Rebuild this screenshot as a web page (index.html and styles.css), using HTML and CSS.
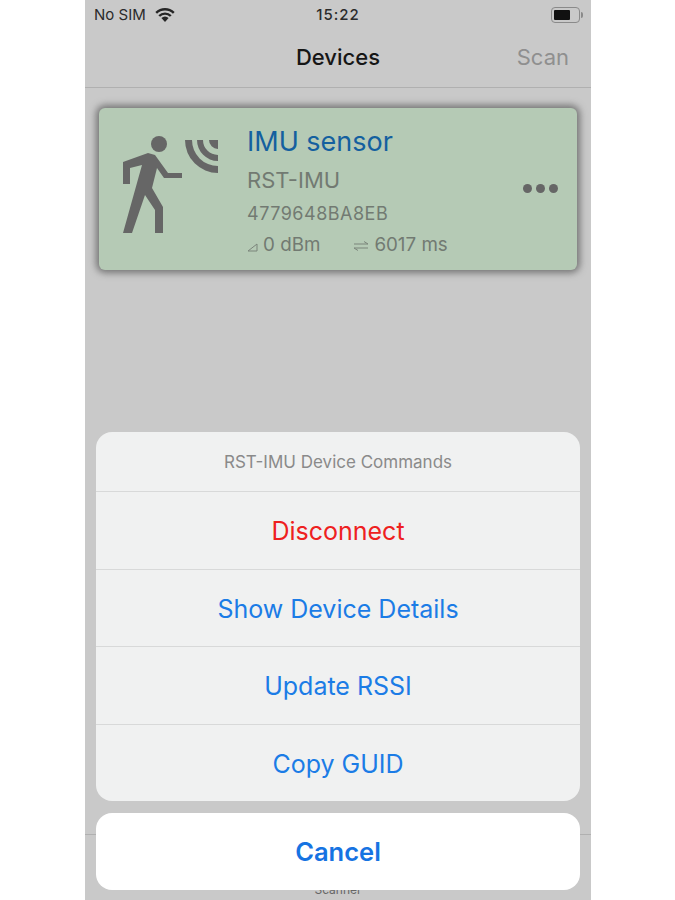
FILE: index.html
```html
<!DOCTYPE html>
<html lang="en">
<head>
<meta charset="utf-8">
<title>Devices</title>
<link rel="stylesheet" href="styles.css">
</head>
<body>
<div class="phone">
  <div class="status">
    <div class="status-left">
      <span>No SIM</span>
      <svg class="wifi" viewBox="0 0 20 14" width="20" height="14"><path d="M10 14l-3.6-4a5 5 0 0 1 7.2 0z" fill="#262626"/><path d="M1.2 4.8a12.6 12.6 0 0 1 17.6 0M4.2 8a8.2 8.2 0 0 1 11.6 0" fill="none" stroke="#262626" stroke-width="2.4"/></svg>
    </div>
    <span class="time">15:22</span>
    <div class="battery"><span class="battery-body"><span class="battery-level"></span></span><span class="battery-tip"></span></div>
  </div>
  <header class="nav">
    <h1 class="nav-title">Devices</h1>
    <span class="nav-action">Scan</span>
  </header>
  <main class="content">
    <article class="card">
      <svg class="walker" viewBox="0 0 100 104" width="100" height="104">
        <circle cx="37" cy="13" r="8" fill="#666"/>
        <path d="M1 31 L26 22 L33 24 L46 42 L60 42 L60 47 L42 47 L35 37 L30 57 L41 76 L41 102 L33 102 L33 79 L23 64 L10 102 L1 102 L20 34 L8 37 L8 53 L1 53 Z" fill="#666"/>
        <path d="M96 42 A33 33 0 0 1 63 9 L70 9 A26 26 0 0 0 96 35 Z M96 30 A21 21 0 0 1 75 9 L81 9 A15 15 0 0 0 96 24 Z M96 18 A9 9 0 0 1 87 9 L96 9 Z" fill="#666"/>
      </svg>
      <div class="info">
        <div class="name">IMU sensor</div>
        <div class="model">RST-IMU</div>
        <div class="guid">4779648BA8EB</div>
        <div class="metrics">
          <span class="metric"><svg class="glyph" viewBox="0 0 11 10" width="11" height="10"><path d="M1 9L10 2V9Z" fill="none" stroke="#7b857b" stroke-width="1"/></svg>0 dBm</span>
          <span class="metric"><svg class="glyph-wide" viewBox="0 0 16 10" width="16" height="10"><path d="M1 3H15M11 .5L15 3M15 7H1M5 9.5L1 7" fill="none" stroke="#7b857b" stroke-width="1"/></svg>6017 ms</span>
        </div>
      </div>
      <div class="dots"><i></i><i></i><i></i></div>
    </article>
  </main>
  <footer class="tabbar"><span class="tab-label">Scanner</span></footer>
  <div class="sheet-wrap">
    <section class="sheet">
      <div class="sheet-title">RST-IMU Device Commands</div>
      <div class="sheet-row danger">Disconnect</div>
      <div class="sheet-row">Show Device Details</div>
      <div class="sheet-row">Update RSSI</div>
      <div class="sheet-row">Copy GUID</div>
    </section>
    <div class="cancel">Cancel</div>
  </div>
</div>
</body>
</html>
```
FILE: styles.css
```css
* { box-sizing: border-box; }
html, body { margin: 0; height: 100%; background: #fff; }
body { font-family: Inter, "Liberation Sans", sans-serif; overflow: hidden; }
.phone {
  position: relative;
  margin-left: 85px;
  width: 506px;
  height: 900px;
  background: #c9c9c9;
  display: flex;
  flex-direction: column;
  overflow: hidden;
}
.status {
  height: 29px;
  padding: 0 8px 0 9px;
  display: flex;
  align-items: center;
  justify-content: space-between;
  position: relative;
  font-size: 15px;
  color: #2b2b2b;
}
.status-left { display: flex; align-items: center; gap: 9px; }
.wifi { display: block; }
.time {
  position: absolute;
  left: 0;
  right: 0;
  text-align: center;
  font-weight: 500;
  letter-spacing: 1px;
}
.battery { display: flex; align-items: center; gap: 1px; }
.battery-body {
  width: 29px;
  height: 16px;
  border: 1px solid #8a8a8a;
  border-radius: 4px;
  padding: 2px;
  display: block;
}
.battery-level { display: block; width: 16px; height: 100%; background: #111; border-radius: 1px; }
.battery-tip { width: 2px; height: 6px; background: #8a8a8a; border-radius: 0 2px 2px 0; }
.nav {
  height: 59px;
  flex: none;
  padding-bottom: 2px;
  border-bottom: 1px solid #b0b0b0;
  display: flex;
  align-items: center;
  justify-content: center;
  position: relative;
}
.nav-title { margin: 0; font-size: 22px; font-weight: 500; color: #161616; }
.nav-action { position: absolute; right: 22px; font-size: 22px; color: #8f8f8f; }
.content { flex: 1; padding: 20px 14px 0; }
.card {
  height: 162px;
  background: #b5cab5;
  border-radius: 6px;
  box-shadow: 0 0 7px 3px #757575;
  display: flex;
  align-items: flex-start;
  padding: 23px 0 0 23px;
  position: relative;
}
.walker { flex: none; margin-right: 25px; }
.info { margin-top: -6px; color: #727a72; }
.name { font-size: 27px; line-height: 34px; color: #14609f; }
.model { font-size: 22px; line-height: 26px; margin-top: 8px; }
.guid { font-size: 18px; line-height: 22px; margin-top: 10px; letter-spacing: .5px; }
.metrics { display: flex; gap: 33px; font-size: 18.8px; line-height: 22px; margin-top: 9px; }
.metric { display: flex; align-items: center; gap: 5px; }
.glyph { margin-top: 3px; }
.glyph-wide { margin-top: 1px; }
.dots { position: absolute; right: 19px; top: 76px; display: flex; gap: 4px; }
.dots i { width: 9px; height: 9px; border-radius: 50%; background: #666; }
.tabbar {
  height: 66px;
  flex: none;
  border-top: 1px solid #b0b0b0;
  display: flex;
  align-items: flex-end;
  justify-content: center;
  font-size: 12px;
  color: #666;
}
.tab-label { margin-bottom: 3px; }
.sheet-wrap {
  position: absolute;
  left: 11px;
  right: 11px;
  top: 432px;
  display: flex;
  flex-direction: column;
  gap: 12px;
}
.sheet { background: #f0f1f1; border-radius: 16px; overflow: hidden; }
.sheet-title {
  height: 59px;
  display: flex;
  align-items: center;
  justify-content: center;
  font-size: 17px;
  color: #8a8a8a;
}
.sheet-row {
  height: 77.5px;
  padding-top: 2px;
  display: flex;
  align-items: center;
  justify-content: center;
  font-size: 25px;
  color: #1b7ce6;
  border-top: 1px solid #d8d9d9;
}
.danger { color: #ee2020; }
.cancel {
  height: 77px;
  background: #fff;
  border-radius: 16px;
  display: flex;
  align-items: center;
  justify-content: center;
  font-size: 25.5px;
  font-weight: 600;
  color: #1673e2;
}
```
